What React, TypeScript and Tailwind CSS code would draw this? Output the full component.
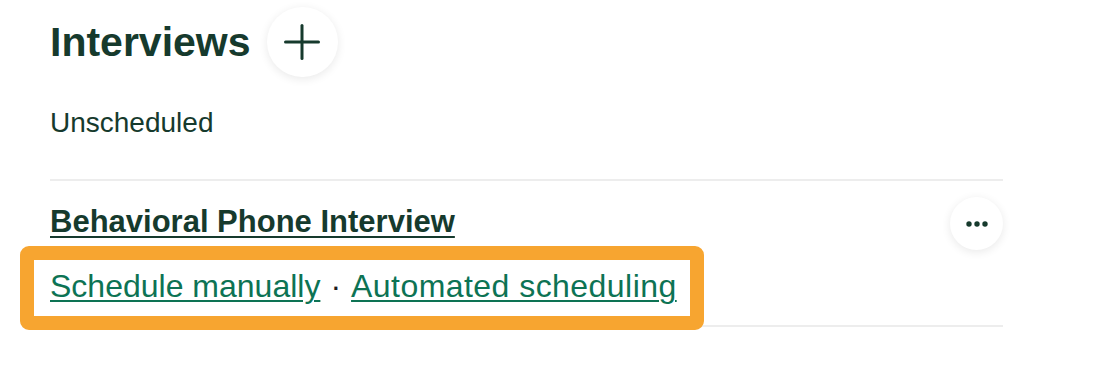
const ink = 'text-[#163a2d]'

function PlusIcon() {
  return (
    <svg width="36" height="36" viewBox="0 0 36 36" fill="none" stroke="#163a2d" strokeWidth="3" strokeLinecap="round">
      <line x1="18" y1="1.5" x2="18" y2="34.5" />
      <line x1="1.5" y1="18" x2="34.5" y2="18" />
    </svg>
  )
}

function DotsIcon() {
  return (
    <svg width="22" height="6" viewBox="0 0 22 6" fill="#163a2d">
      <circle cx="3" cy="3" r="2.7" />
      <circle cx="11" cy="3" r="2.7" />
      <circle cx="19" cy="3" r="2.7" />
    </svg>
  )
}

function App() {
  return (
    <div className="min-h-screen bg-white font-['Liberation_Sans',Arial,sans-serif]">
      <div className="ml-[50px] w-[953px] pt-[7px]">
        {/* header */}
        <div className="flex h-[70px] items-center gap-[16px]">
          <h1 className={`text-[41px] font-bold leading-none ${ink}`}>Interviews</h1>
          <button className="flex h-[70px] w-[71px] items-center justify-center rounded-full bg-white shadow-[0_2px_10px_rgba(0,0,0,0.09)]">
            <PlusIcon />
          </button>
        </div>

        <p className={`mt-[32px] text-[28px] leading-[28px] ${ink}`}>Unscheduled</p>

        <div className="mt-[42px] h-[2px] bg-[#ededed]" />

        {/* interview row */}
        <div className="flex items-start justify-between pt-[16px]">
          <div className="flex flex-col items-start">
            <a
              href="#"
              className={`mt-[9px] text-[31px] font-bold leading-[31px] underline decoration-2 underline-offset-[4px] ${ink}`}
            >
              Behavioral Phone Interview
            </a>
            <div className="relative z-10 -ml-[30px] mt-[9px] rounded-[9px] border-[14px] border-[#f7a530] bg-white pb-[4px] pl-[16px] pr-[13px]">
              <div className="flex items-baseline text-[32px] leading-[52px] text-[#0d7354]">
                <a href="#" className="underline decoration-2 underline-offset-[3px]">
                  Schedule manually
                </a>
                <span className="mx-[10px] text-[#1c1c1c]">·</span>
                <a href="#" className="tracking-[0.45px] underline decoration-2 underline-offset-[3px]">
                  Automated scheduling
                </a>
              </div>
            </div>
          </div>
          <button className="flex h-[53px] w-[53px] items-center justify-center rounded-full bg-white shadow-[0_2px_10px_rgba(0,0,0,0.09)]">
            <DotsIcon />
          </button>
        </div>

        <div className="-mt-[5px] h-[2px] bg-[#ededed]" />
      </div>
    </div>
  )
}

export default App
